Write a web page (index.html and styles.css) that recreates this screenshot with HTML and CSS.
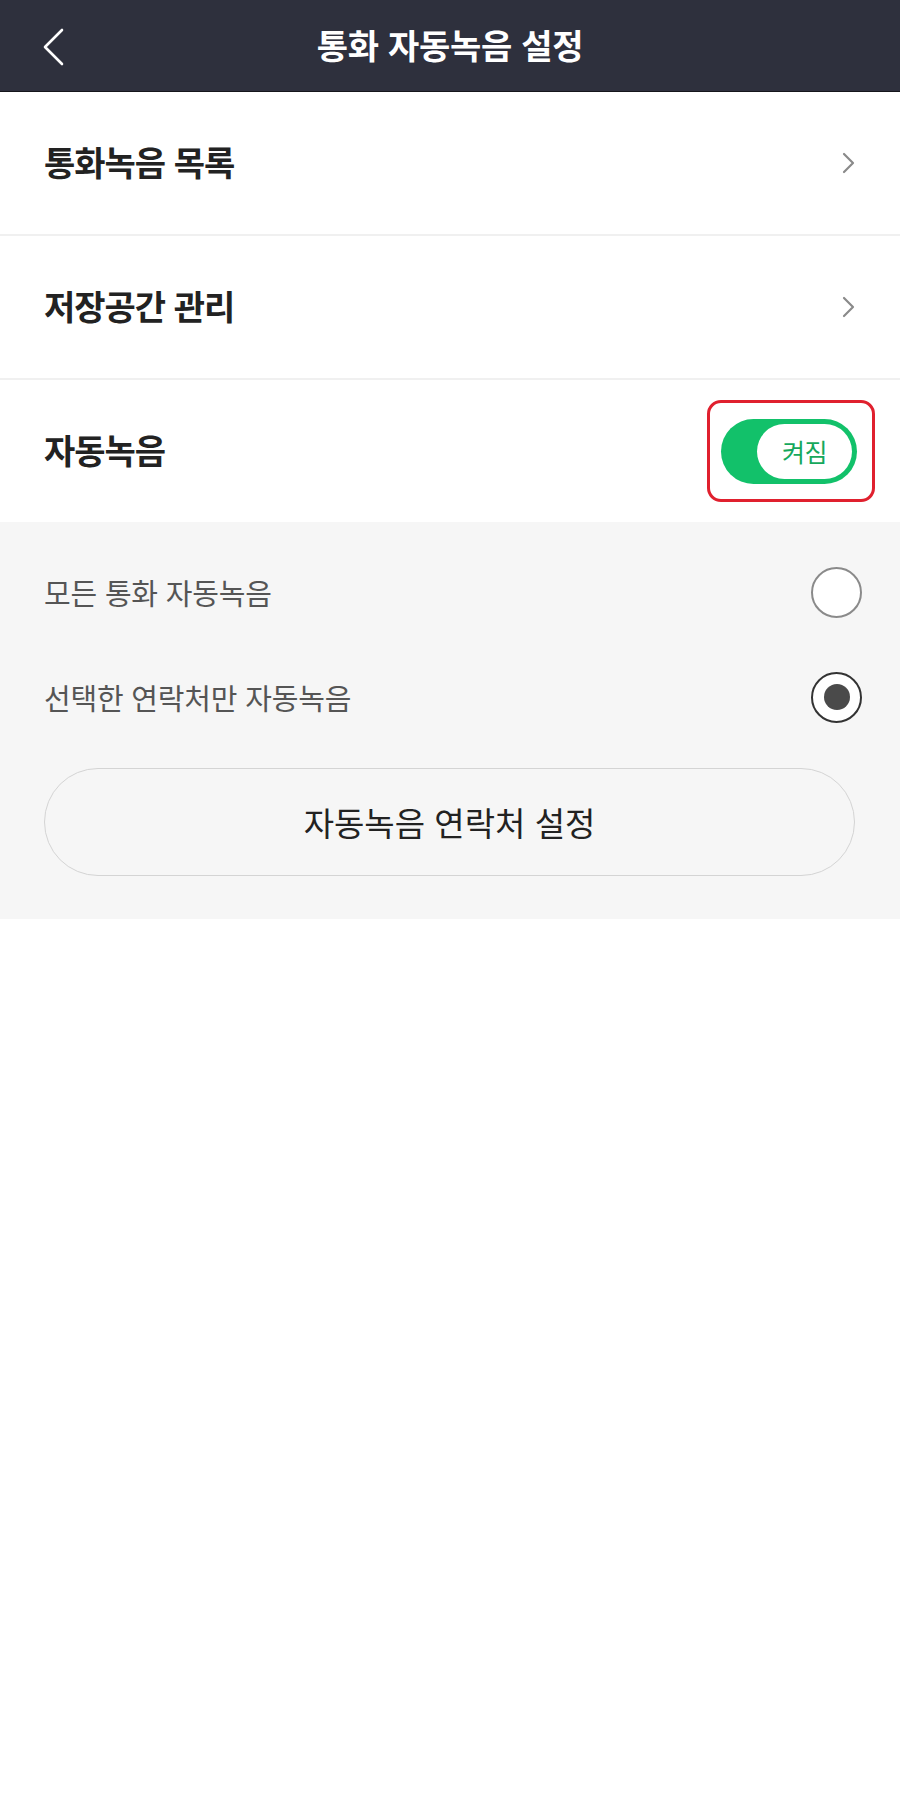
FILE: index.html
```html
<!DOCTYPE html>
<html lang="ko">
<head>
<meta charset="utf-8">
<title>통화 자동녹음 설정</title>
<link rel="stylesheet" href="styles.css">
</head>
<body>
<header class="topbar">
  <span class="back" aria-label="뒤로">
    <svg width="24" height="38" viewBox="0 0 24 38"><path d="M20 2 L3 19 L20 36" fill="none" stroke="#ffffff" stroke-width="2.6" stroke-linecap="round" stroke-linejoin="round"/></svg>
  </span>
  <h1 class="title">통화 자동녹음 설정</h1>
</header>
<main>
  <div class="row row-sep">
    <span class="row-label">통화녹음 목록</span>
    <svg class="chev" width="14" height="22" viewBox="0 0 14 22"><path d="M2 2 L11 11 L2 20" fill="none" stroke="#8a8a8a" stroke-width="2.2" stroke-linecap="round" stroke-linejoin="round"/></svg>
  </div>
  <div class="row row-sep">
    <span class="row-label">저장공간 관리</span>
    <svg class="chev" width="14" height="22" viewBox="0 0 14 22"><path d="M2 2 L11 11 L2 20" fill="none" stroke="#8a8a8a" stroke-width="2.2" stroke-linecap="round" stroke-linejoin="round"/></svg>
  </div>
  <div class="row row-toggle">
    <span class="row-label">자동녹음</span>
    <div class="highlight">
      <div class="switch">
        <div class="knob">켜짐</div>
      </div>
    </div>
  </div>
  <section class="options">
    <div class="option">
      <span class="option-label">모든 통화 자동녹음</span>
      <span class="radio"></span>
    </div>
    <div class="option">
      <span class="option-label">선택한 연락처만 자동녹음</span>
      <span class="radio radio-on"><span class="dot"></span></span>
    </div>
    <div class="btn">자동녹음 연락처 설정</div>
  </section>
</main>
</body>
</html>
```
FILE: styles.css
```css
* { box-sizing: border-box; }
html, body {
  margin: 0;
  padding: 0;
  background: #ffffff;
  font-family: "Noto Sans CJK KR", "Noto Sans", sans-serif;
}
.topbar {
  height: 92px;
  background: #2e303d;
  border-bottom: 1px solid #15161c;
  display: flex;
  align-items: center;
  justify-content: center;
  position: relative;
}
.back {
  position: absolute;
  left: 42px;
  top: 28px;
  display: flex;
}
.title {
  margin: 0;
  color: #ffffff;
  font-size: 34px;
  font-weight: 700;
  letter-spacing: -0.3px;
  line-height: 1;
  padding-bottom: 2px;
}
.row {
  height: 144px;
  display: flex;
  align-items: center;
  justify-content: space-between;
  padding: 0 44px;
}
.row-sep {
  border-bottom: 2px solid #f0f0f0;
}
.row-label {
  font-size: 34px;
  font-weight: 700;
  color: #222222;
  letter-spacing: -1px;
  padding-bottom: 4px;
}
.row-toggle {
  height: 142px;
  padding-right: 25px;
}
.highlight {
  width: 168px;
  height: 102px;
  border: 3.5px solid #e0202e;
  border-radius: 14px;
  display: flex;
  align-items: center;
  padding-left: 11px;
}
.switch {
  width: 136px;
  height: 65px;
  border-radius: 33px;
  background: #12c16a;
  padding: 5px;
  display: flex;
  justify-content: flex-end;
}
.knob {
  width: 95px;
  height: 55px;
  border-radius: 28px;
  background: #ffffff;
  color: #15a85c;
  font-size: 25px;
  font-weight: 400;
  letter-spacing: -0.5px;
  display: flex;
  align-items: center;
  justify-content: center;
}
.options {
  background: #f6f6f6;
  padding: 18px 38px 43px 44px;
}
.option {
  height: 104px;
  display: flex;
  align-items: center;
  justify-content: space-between;
}
.option + .option { margin-top: 1px; }
.option-label {
  font-size: 29px;
  color: #555555;
  letter-spacing: -0.2px;
}
.radio {
  width: 51px;
  height: 51px;
  border-radius: 50%;
  border: 2px solid #8a8a8a;
  background: #ffffff;
  display: flex;
  align-items: center;
  justify-content: center;
}
.radio-on {
  border: 2.5px solid #333333;
}
.dot {
  width: 26px;
  height: 26px;
  border-radius: 50%;
  background: #4a4a4a;
}
.btn {
  margin-top: 19px;
  margin-right: 7px;
  height: 108px;
  border: 1.5px solid #d4d4d4;
  border-radius: 54px;
  display: flex;
  align-items: center;
  justify-content: center;
  font-size: 33px;
  color: #222222;
  letter-spacing: 0;
}
```
